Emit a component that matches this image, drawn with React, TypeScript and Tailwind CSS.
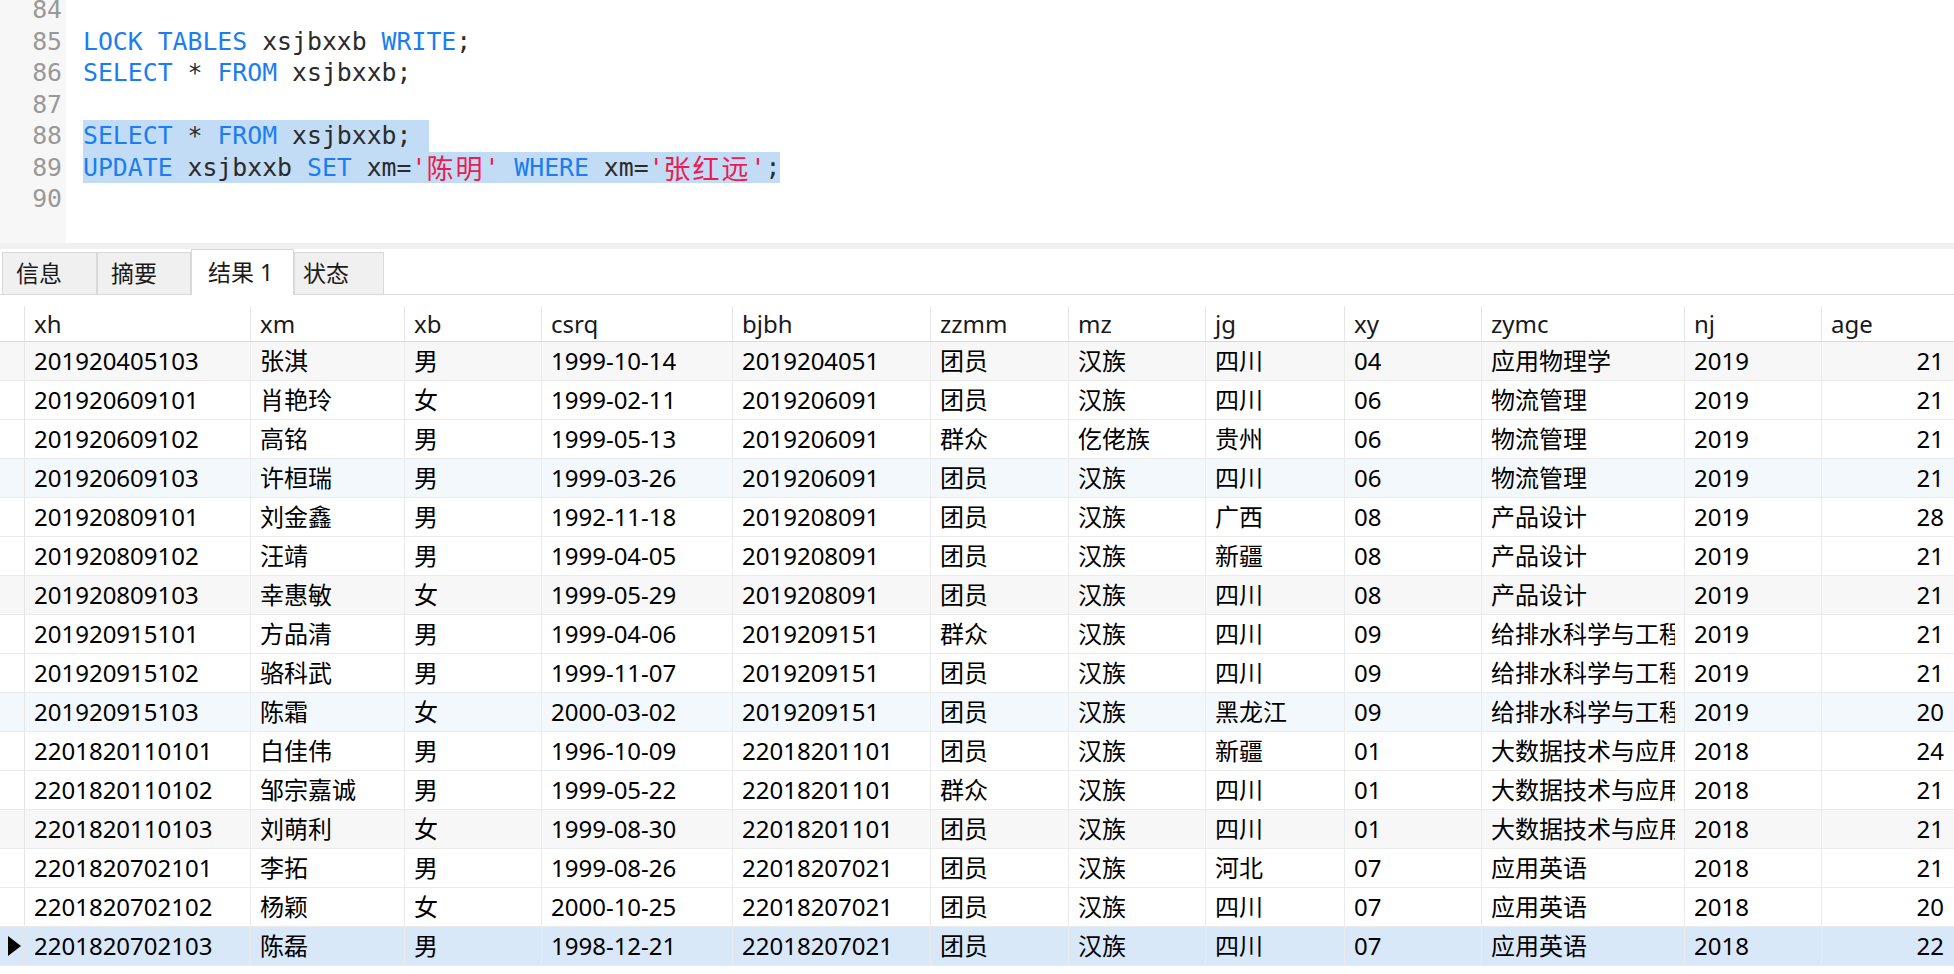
import React from 'react'

type Tok = { t: string; c?: 'k' | 's' | 'p'; cjk?: boolean }

const codeLines: { n: number; sel?: 'pad' | 'tight'; toks: Tok[] }[] = [
  { n: 84, toks: [] },
  {
    n: 85,
    toks: [
      { t: 'LOCK TABLES', c: 'k' },
      { t: ' xsjbxxb ' },
      { t: 'WRITE', c: 'k' },
      { t: ';' },
    ],
  },
  {
    n: 86,
    toks: [
      { t: 'SELECT', c: 'k' },
      { t: ' * ' },
      { t: 'FROM', c: 'k' },
      { t: ' xsjbxxb;' },
    ],
  },
  { n: 87, toks: [] },
  {
    n: 88,
    sel: 'pad',
    toks: [
      { t: 'SELECT', c: 'k' },
      { t: ' * ' },
      { t: 'FROM', c: 'k' },
      { t: ' xsjbxxb;' },
    ],
  },
  {
    n: 89,
    sel: 'tight',
    toks: [
      { t: 'UPDATE', c: 'k' },
      { t: ' xsjbxxb ' },
      { t: 'SET', c: 'k' },
      { t: ' xm=' },
      { t: "'", c: 's' },
      { t: '陈明', c: 's', cjk: true },
      { t: "'", c: 's' },
      { t: ' ' },
      { t: 'WHERE', c: 'k' },
      { t: ' xm=' },
      { t: "'", c: 's' },
      { t: '张红远', c: 's', cjk: true },
      { t: "'", c: 's' },
      { t: ';' },
    ],
  },
  { n: 90, toks: [] },
]

const cols = [
  { key: 'xh', w: 'w-[226px]' },
  { key: 'xm', w: 'w-[154px]' },
  { key: 'xb', w: 'w-[137px]' },
  { key: 'csrq', w: 'w-[191px]' },
  { key: 'bjbh', w: 'w-[198px]' },
  { key: 'zzmm', w: 'w-[138px]' },
  { key: 'mz', w: 'w-[137px]' },
  { key: 'jg', w: 'w-[139px]' },
  { key: 'xy', w: 'w-[137px]' },
  { key: 'zymc', w: 'w-[203px]' },
  { key: 'nj', w: 'w-[137px]' },
  { key: 'age', w: 'w-[132px]' },
]

const rows = [
  ['201920405103', '张淇', '男', '1999-10-14', '2019204051', '团员', '汉族', '四川', '04', '应用物理学', '2019', '21'],
  ['201920609101', '肖艳玲', '女', '1999-02-11', '2019206091', '团员', '汉族', '四川', '06', '物流管理', '2019', '21'],
  ['201920609102', '高铭', '男', '1999-05-13', '2019206091', '群众', '仡佬族', '贵州', '06', '物流管理', '2019', '21'],
  ['201920609103', '许桓瑞', '男', '1999-03-26', '2019206091', '团员', '汉族', '四川', '06', '物流管理', '2019', '21'],
  ['201920809101', '刘金鑫', '男', '1992-11-18', '2019208091', '团员', '汉族', '广西', '08', '产品设计', '2019', '28'],
  ['201920809102', '汪靖', '男', '1999-04-05', '2019208091', '团员', '汉族', '新疆', '08', '产品设计', '2019', '21'],
  ['201920809103', '幸惠敏', '女', '1999-05-29', '2019208091', '团员', '汉族', '四川', '08', '产品设计', '2019', '21'],
  ['201920915101', '方品清', '男', '1999-04-06', '2019209151', '群众', '汉族', '四川', '09', '给排水科学与工程', '2019', '21'],
  ['201920915102', '骆科武', '男', '1999-11-07', '2019209151', '团员', '汉族', '四川', '09', '给排水科学与工程', '2019', '21'],
  ['201920915103', '陈霜', '女', '2000-03-02', '2019209151', '团员', '汉族', '黑龙江', '09', '给排水科学与工程', '2019', '20'],
  ['2201820110101', '白佳伟', '男', '1996-10-09', '22018201101', '团员', '汉族', '新疆', '01', '大数据技术与应用', '2018', '24'],
  ['2201820110102', '邹宗嘉诚', '男', '1999-05-22', '22018201101', '群众', '汉族', '四川', '01', '大数据技术与应用', '2018', '21'],
  ['2201820110103', '刘萌利', '女', '1999-08-30', '22018201101', '团员', '汉族', '四川', '01', '大数据技术与应用', '2018', '21'],
  ['2201820702101', '李拓', '男', '1999-08-26', '22018207021', '团员', '汉族', '河北', '07', '应用英语', '2018', '21'],
  ['2201820702102', '杨颖', '女', '2000-10-25', '22018207021', '团员', '汉族', '四川', '07', '应用英语', '2018', '20'],
  ['2201820702103', '陈磊', '男', '1998-12-21', '22018207021', '团员', '汉族', '四川', '07', '应用英语', '2018', '22'],
]

function rowBg(i: number) {
  if (i === 15) return 'bg-[#d9e8f8]'
  if (i === 3 || i === 9) return 'bg-[#f3f8fd]'
  if (i === 0 || i === 6 || i === 12) return 'bg-[#f7f7f7]'
  return 'bg-white'
}

function tokClass(tok: Tok) {
  let cls = ''
  if (tok.c === 'k') cls = 'text-[#1a7ef2]'
  else if (tok.c === 's') cls = 'text-[#ec1c50]'
  else cls = 'text-[#2b2b2b]'
  // CJK glyphs sit a bit wider than two mono cells in the editor
  if (tok.cjk) cls += " font-['Noto_Sans_CJK_SC'] text-[27px] leading-none tracking-[2px]"
  return cls
}

function Editor() {
  return (
    <div className="flex h-[243px] overflow-hidden bg-white font-['DejaVu_Sans_Mono',monospace] text-[24.8px]">
      <div className="w-[66px] shrink-0 bg-[#f7f7f7]">
        <div className="-mt-[6px]">
          {codeLines.map((l) => (
            <div key={l.n} className="flex h-[31.5px] items-center justify-end pr-[4px] text-[#999999]">
              {l.n}
            </div>
          ))}
        </div>
      </div>
      <div className="flex-1 pl-[17px]">
        <div className="-mt-[6px]">
          {codeLines.map((l) => (
            <div key={l.n} className="flex h-[31.5px] items-stretch">
              <div
                className={
                  'flex items-center whitespace-pre ' +
                  (l.sel ? 'bg-[#c2dcf5] ' : '') +
                  (l.sel === 'pad' ? 'pr-[18px]' : '')
                }
              >
                {l.toks.map((tok, i) => (
                  <span key={i} className={tokClass(tok)}>
                    {tok.t}
                  </span>
                ))}
              </div>
            </div>
          ))}
        </div>
      </div>
    </div>
  )
}

function Tabs() {
  const tabs = [
    { label: '信息', w: 'w-[95px]', pl: 'pl-[13px]', ml: 'ml-[2px]' },
    { label: '摘要', w: 'w-[94px]', pl: 'pl-[13px]', ml: '' },
    { label: '结果 1', w: 'w-[103px]', pl: 'pl-[16px]', ml: '', active: true },
    { label: '状态', w: 'w-[90px]', pl: 'pl-[8px]', ml: '' },
  ]
  return (
    <div className="flex h-[46px] items-end border-b border-[#d9d9d9] bg-white text-[23px] text-[#1a1a1a]">
      {tabs.map((t) =>
        t.active ? (
          <div
            key={t.label}
            className={`-mb-px flex h-[46px] items-center border-x border-t border-[#d9d9d9] bg-white ${t.w} ${t.pl}`}
          >
            {t.label}
          </div>
        ) : (
          <div
            key={t.label}
            className={`flex h-[42px] items-center border border-b-0 border-[#d9d9d9] bg-[#f0f0f0] ${t.w} ${t.pl} ${t.ml}`}
          >
            {t.label}
          </div>
        ),
      )}
    </div>
  )
}

function Grid() {
  return (
    <div className="text-[24px] text-black">
      <div className="flex h-[36px] border-b border-[#d9d9d9]">
        <div className="w-[25px] shrink-0 border-r border-[#e6e6e6]" />
        {cols.map((c, i) => (
          <div
            key={c.key}
            className={`${c.w} flex shrink-0 items-center pl-[9px] text-[#1a1a1a] ${i < cols.length - 1 ? 'border-r border-[#e6e6e6]' : ''}`}
          >
            {c.key}
          </div>
        ))}
      </div>
      {rows.map((r, ri) => (
        <div key={ri} className={`flex h-[39px] border-b border-[#ebebeb] ${rowBg(ri)}`}>
          <div className="flex w-[25px] shrink-0 items-center border-r border-[#e6e6e6] pl-[8px]">
            {ri === 15 && (
              <svg width="13" height="20" viewBox="0 0 13 20">
                <path d="M0 0 L13 10 L0 20 Z" fill="#000" />
              </svg>
            )}
          </div>
          {cols.map((c, ci) => (
            <div
              key={c.key}
              className={`${c.w} flex shrink-0 items-center overflow-hidden whitespace-nowrap ${
                ci === cols.length - 1 ? 'justify-end pr-[10px]' : 'pl-[9px] pr-[9px] border-r border-[#ebebeb]'
              }`}
            >
              <span className="overflow-hidden">{r[ci]}</span>
            </div>
          ))}
        </div>
      ))}
    </div>
  )
}

export default function App() {
  return (
    <div className="h-[974px] w-[1954px] overflow-hidden bg-white font-['Noto_Sans','Noto_Sans_CJK_SC',sans-serif]">
      <Editor />
      <div className="h-[6px] bg-[#f0f0f0]" />
      <Tabs />
      <div className="h-[11px]" />
      <Grid />
    </div>
  )
}
